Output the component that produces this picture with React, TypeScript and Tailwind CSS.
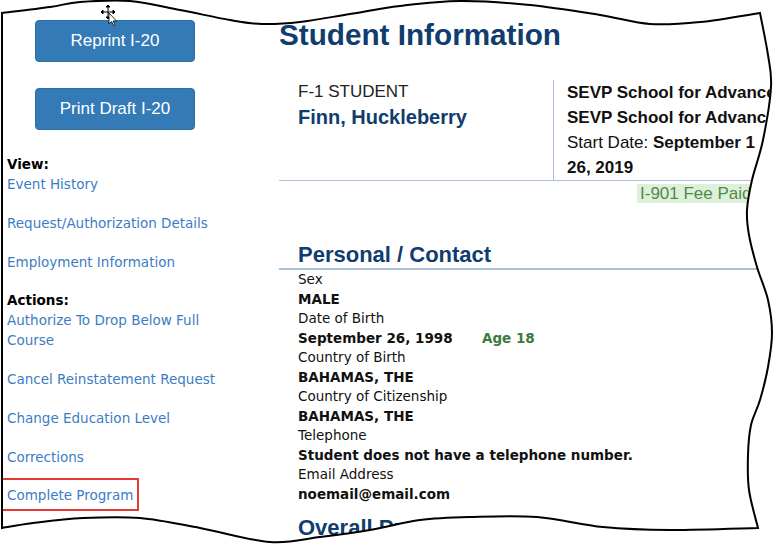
import React from "react";

const verdana = "font-['DejaVu_Sans',Verdana,sans-serif]";
const arial = "font-['Liberation_Sans',Arial,sans-serif]";

// torn-paper outline, traced from the screenshot
const edge: [number, number][] = [
  [2, 13], [50, 7], [80, 2], [130, 1], [180, 10], [230, 20], [262, 24], [300, 22],
  [350, 14], [400, 6], [460, 1], [530, 5], [600, 15], [650, 24], [700, 22], [760, 13],
  [768, 55], [771, 87], [763, 140], [752, 180], [747, 210], [749, 235], [757, 267],
  [768, 300], [772, 333], [768, 367], [760, 400], [751, 425], [748, 455], [749, 490], [758, 528],
  [670, 530], [603, 527], [537, 517], [470, 517], [420, 520], [370, 530], [320, 537],
  [270, 542], [200, 528], [140, 518], [83, 518], [33, 523], [2, 528],
];

function smoothPath(pts: [number, number][]) {
  // corners where the line should break rather than curve
  const corners = new Set([0, 15, 30, pts.length - 1]);
  let d = `M${pts[0][0]} ${pts[0][1]}`;
  for (let i = 0; i < pts.length - 1; i++) {
    const p0 = corners.has(i) ? pts[i] : pts[i - 1];
    const p1 = pts[i];
    const p2 = pts[i + 1];
    const p3 = corners.has(i + 1) ? pts[i + 1] : pts[i + 2];
    const c1 = [p1[0] + (p2[0] - p0[0]) / 6, p1[1] + (p2[1] - p0[1]) / 6];
    const c2 = [p2[0] - (p3[0] - p1[0]) / 6, p2[1] - (p3[1] - p1[1]) / 6];
    d += ` C${c1[0]} ${c1[1]} ${c2[0]} ${c2[1]} ${p2[0]} ${p2[1]}`;
  }
  return d + " Z";
}

export default function App() {
  const outline = smoothPath(edge);
  return (
    <div className="relative w-[775px] h-[545px] overflow-hidden bg-white">
      <div className="flex">
        {/* Sidebar */}
        <aside className={`w-[279px] shrink-0 pl-[7px] pt-[20px] text-[13.5px] ${verdana}`}>
          <SideButton label="Reprint I-20" />
          <div className="h-[26px]" />
          <SideButton label="Print Draft I-20" />
          <div className="w-[224px] pt-[24px]">
            <div className="font-bold text-black leading-[20px]">View:</div>
            <SideLink>Event History</SideLink>
            <SideLink>Request/Authorization Details</SideLink>
            <SideLink>Employment Information</SideLink>
            <div className="font-bold text-black leading-[20px]">Actions:</div>
            <SideLink>Authorize To Drop Below Full Course</SideLink>
            <SideLink>Cancel Reinstatement Request</SideLink>
            <SideLink>Change Education Level</SideLink>
            <SideLink>Corrections</SideLink>
            <div className="-ml-[6px] w-[138px] border-2 border-[#e53935] pl-[4px] pt-[5px] pb-[4px] leading-[20px] text-[#3b7dc4] -mt-[7px]">
              Complete Program
            </div>
          </div>
        </aside>

        {/* Main */}
        <main className="flex-1 min-w-0">
          <h1 className={`${arial} mt-[18px] text-[29.7px] leading-[34px] font-bold text-[#0f3d6e] whitespace-nowrap`}>
            Student Information
          </h1>

          <div className={`${arial} mt-[27px] flex border-b border-[#a9c0d8] w-[480px]`}>
            <div className="w-[274px] shrink-0 pl-[19px] text-[17px] leading-[25px]">
              <div className="text-[#222]">F-1 STUDENT</div>
              <div className="text-[20px] font-bold text-[#0f3d6e] leading-[26px]">Finn, Huckleberry</div>
            </div>
            <div className="border-l border-[#a9c0d8] pl-[13px] text-[17px] leading-[25px] text-[#111] whitespace-nowrap mt-[1px]">
              <div className="font-bold">SEVP School for Advanced Studies</div>
              <div className="font-bold">SEVP School for Advanced Studies</div>
              <div>
                Start Date: <span className="font-bold">September 1</span>
              </div>
              <div className="font-bold">26, 2019</div>
            </div>
          </div>

          <div className={`${arial} pl-[358px] mt-[3px] text-[17px] leading-[19px] whitespace-nowrap`}>
            <span className="bg-[#dff0d8] text-[#4e8a4e] px-[3px]">I-901 Fee Paid</span>
          </div>

          <h2 className={`${arial} mt-[39px] pl-[19px] text-[22px] leading-[26px] font-bold text-[#0f3d6e] border-b-2 border-[#a9c0d8] w-[480px]`}>
            Personal / Contact
          </h2>

          <div className={`${verdana} pl-[19px] text-[13.5px] leading-[19.5px] text-[#111] whitespace-nowrap`}>
            <Field label="Sex" value="MALE" />
            <div>Date of Birth</div>
            <div className="font-bold">
              <span className="inline-block w-[184px]">September 26, 1998</span>
              <span className="text-[#3d7a3d]">Age 18</span>
            </div>
            <Field label="Country of Birth" value="BAHAMAS, THE" />
            <Field label="Country of Citizenship" value="BAHAMAS, THE" />
            <Field label="Telephone" value="Student does not have a telephone number." />
            <Field label="Email Address" value="noemail@email.com" />
          </div>

          <h2 className={`${arial} mt-[11px] pl-[19px] text-[22px] leading-[26px] font-bold text-[#0f3d6e] whitespace-nowrap`}>
            Overall Program
          </h2>
        </main>
      </div>

      {/* torn edge */}
      <svg className="absolute inset-0 pointer-events-none" width="775" height="545" viewBox="0 0 775 545">
        <path d={`M-10 -10 H790 V560 H-10 Z ${outline}`} fill="#fff" fillRule="evenodd" />
        <path d={outline} fill="none" stroke="#000" strokeWidth="2" />
        {/* move cursor */}
        <g stroke="#000" strokeWidth="1" fill="#000">
          <line x1="108" y1="6" x2="108" y2="18" />
          <line x1="102" y1="12" x2="114" y2="12" />
          <path d="M108 5 l-2 2 h4 z M108 19 l-2 -2 h4 z M101 12 l2 -2 v4 z M115 12 l-2 -2 v4 z" />
        </g>
        <path d="M109 13 L109 24 L111.5 21.5 L113.5 25.5 L115 24.8 L113 21 L116.5 21 Z" fill="#fff" stroke="#000" strokeWidth="0.8" />
      </svg>
    </div>
  );
}

function SideButton({ label }: { label: string }) {
  return (
    <div className="pl-[28px]">
      <div
        className={`${arial} w-[160px] h-[42px] rounded-[4px] bg-[#337ab7] border border-[#2e6da4] text-white text-[17px] flex items-center justify-center`}
      >
        {label}
      </div>
    </div>
  );
}

function SideLink({ children }: { children: React.ReactNode }) {
  return <div className="text-[#3b7dc4] leading-[20px] mb-[18.75px]">{children}</div>;
}

function Field({ label, value }: { label: string; value: string }) {
  return (
    <>
      <div>{label}</div>
      <div className="font-bold">{value}</div>
    </>
  );
}
